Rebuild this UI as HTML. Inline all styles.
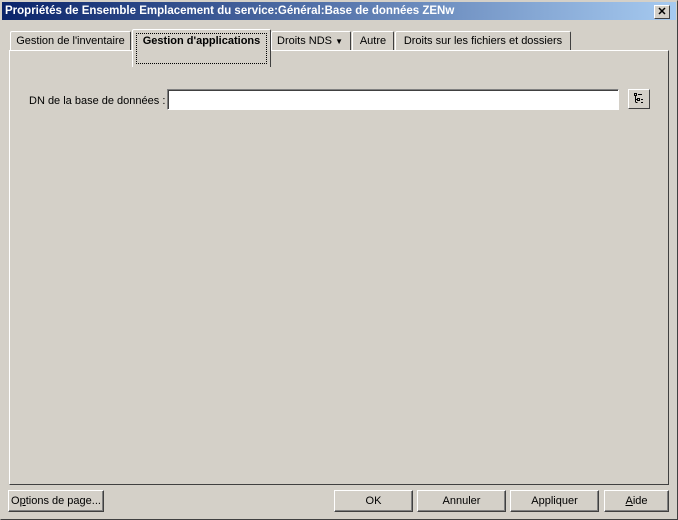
<!DOCTYPE html><html><head><style>
body{margin:0;width:678px;height:520px;background:#d4d0c8;font-family:"Liberation Sans",sans-serif;font-size:11px;position:relative;overflow:hidden}
.win{position:absolute;left:0;top:0;width:676px;height:518px;border:1px solid;border-color:#d4d0c8 #404040 #404040 #d4d0c8;}
.title{position:absolute;left:2px;top:2px;width:674px;height:18px;background:linear-gradient(to right,#0a246a,#a6caf0);color:#fff;font-weight:bold;font-size:11.5px;line-height:18px;padding-left:3px;box-sizing:border-box;font-family:"Liberation Sans",sans-serif}
.x{position:absolute;right:6px;top:3px;width:14px;height:12px;background:#d4d0c8;border:1px solid;border-color:#fff #404040 #404040 #fff;color:#000;font-size:11px;line-height:12px;text-align:center;font-weight:bold}
.tab{position:absolute;top:31px;height:19px;border:1px solid;border-bottom:none;border-color:#fff #404040 #404040 #fff;line-height:19px;text-align:center;box-sizing:border-box;border-radius:2px 2px 0 0}
.panel{position:absolute;left:9px;top:50px;width:660px;height:435px;border:1px solid;border-color:#fff #404040 #404040 #fff;box-sizing:border-box}
.btn{position:absolute;top:490px;height:22px;border:1px solid;border-color:#fff #404040 #404040 #fff;box-shadow:inset -1px -1px #808080;box-sizing:border-box;text-align:center;line-height:20px}
</style></head><body>
<div class="win"></div>
<div class="title">Propriétés de Ensemble Emplacement du service:Général:Base de données ZENw<div class="x">✕</div></div>
<div class="panel"></div>
<div class="tab" style="left:10px;width:121px">Gestion de l'inventaire</div>
<div class="tab" style="left:271px;width:80px;text-align:left;padding-left:5px">Droits NDS <span style="font-size:8px">▼</span></div>
<div class="tab" style="left:352px;width:42px">Autre</div>
<div class="tab" style="left:395px;width:176px">Droits sur les fichiers et dossiers</div>
<div class="tab" style="left:132px;top:29px;width:139px;height:38px;background:#d4d0c8;font-weight:bold;line-height:22px"><div style="position:absolute;left:3px;top:3px;right:3px;bottom:3px;border:1px dotted #000"></div>Gestion d'applications</div>
<div style="position:absolute;left:29px;top:95px">DN de la base de données :</div>
<div style="position:absolute;left:167px;top:89px;width:452px;height:21px;background:#fff;border:1px solid;border-color:#808080 #fff #fff #808080;box-sizing:border-box;box-shadow:inset 1px 1px #404040"></div>
<div style="position:absolute;left:628px;top:89px;width:22px;height:20px;border:1px solid;border-color:#fff #404040 #404040 #fff;box-sizing:border-box"><svg width="20" height="18" style="position:absolute;left:0;top:0"><g fill="none" stroke="#000" stroke-width="1"><rect x="5.5" y="3.5" width="2" height="2"/><path d="M9 4.5h4M6.5 6v6M6.5 9.5h2M6.5 12.5h2"/><rect x="8.5" y="8.5" width="2" height="2"/><path d="M12 9.5h2M12 12.5h2"/></g></svg></div>
<div class="btn" style="left:8px;width:96px">O<u>p</u>tions de page...</div>
<div class="btn" style="left:334px;width:79px">OK</div>
<div class="btn" style="left:417px;width:89px">Annuler</div>
<div class="btn" style="left:510px;width:89px">Appliquer</div>
<div class="btn" style="left:604px;width:65px"><u>A</u>ide</div>
</body></html>
